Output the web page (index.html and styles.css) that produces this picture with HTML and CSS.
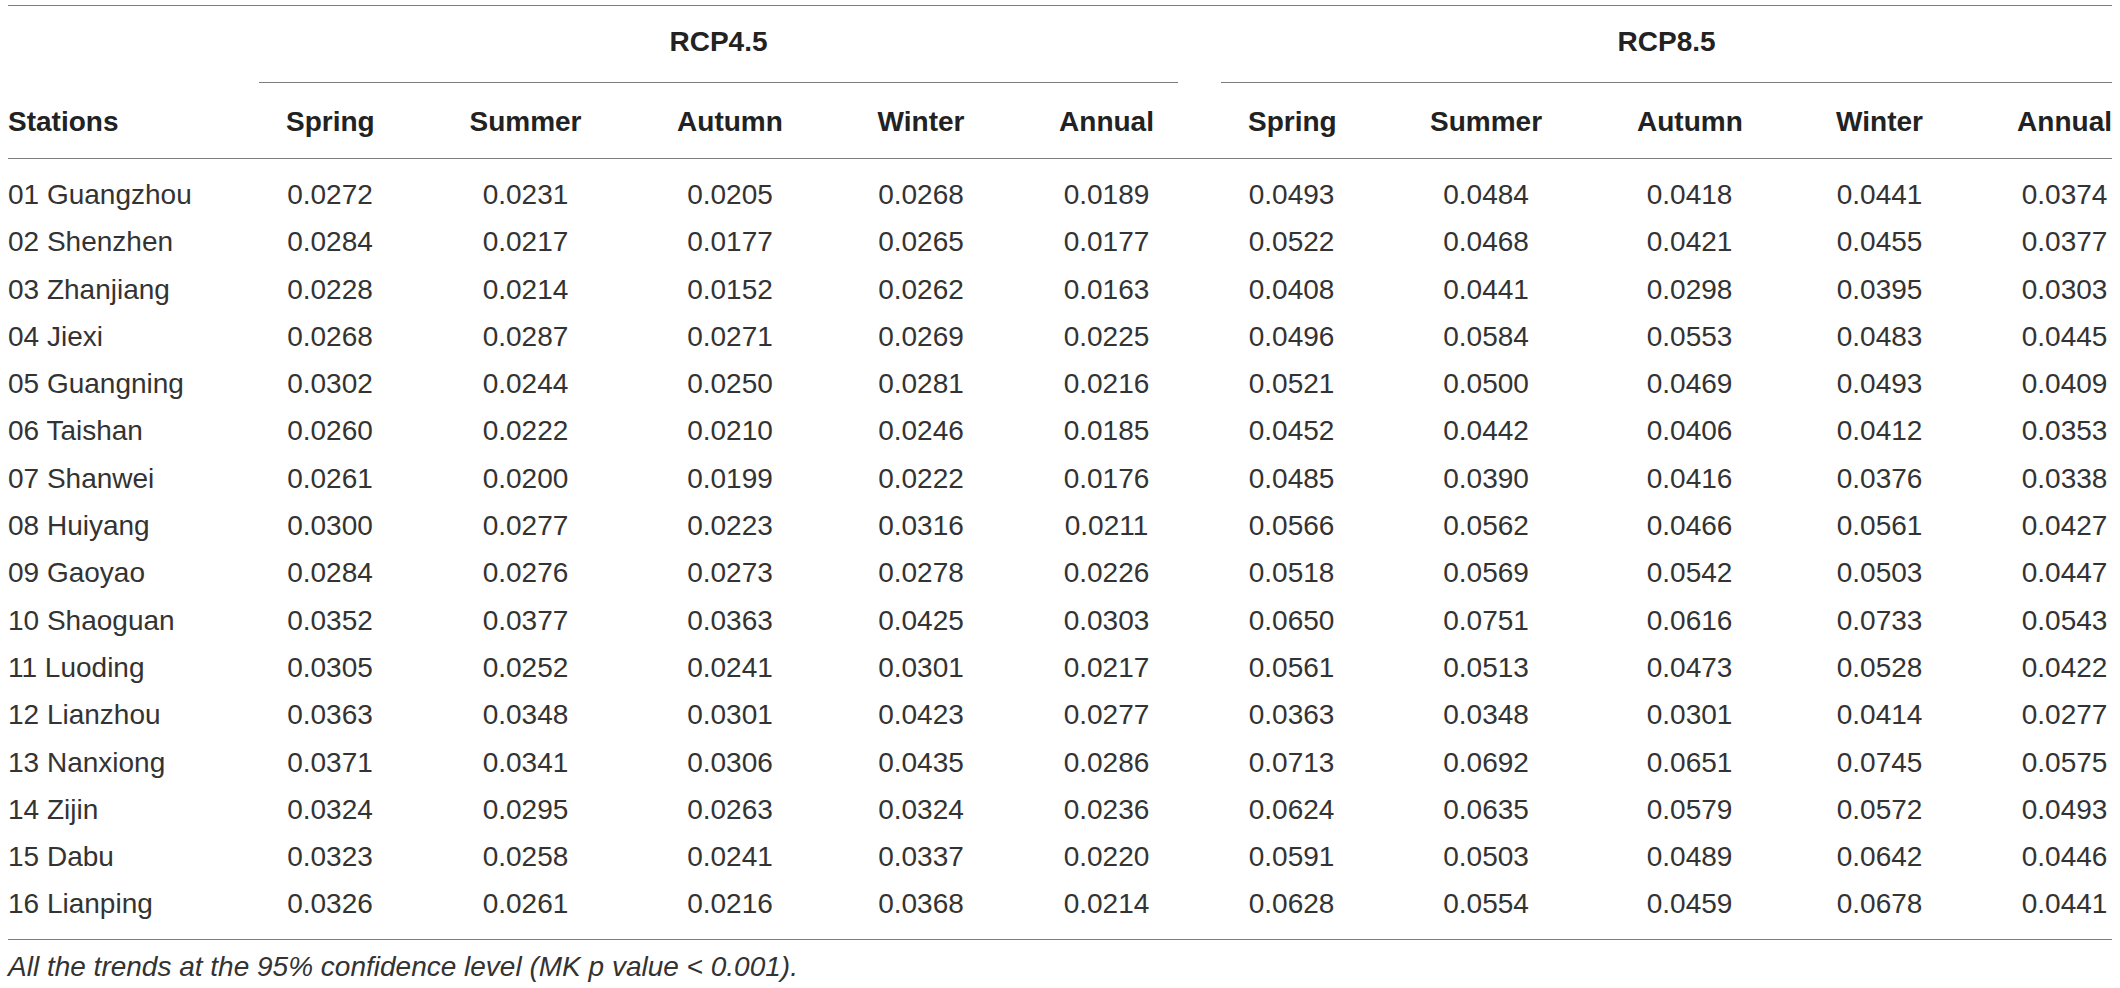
FILE: index.html
```html
<!DOCTYPE html>
<html lang="en">
<head>
<meta charset="utf-8">
<title>Trends table</title>
<link rel="stylesheet" href="styles.css">
</head>
<body>
<div class="page">
<table class="data">
  <colgroup>
    <col class="c-st">
    <col class="c-sp"><col class="c-su"><col class="c-au"><col class="c-wi"><col class="c-an">
    <col class="c-sp2"><col class="c-su2"><col class="c-au2"><col class="c-wi2"><col class="c-an2">
  </colgroup>
  <thead>
    <tr class="group-row">
      <th class="blank"></th>
      <th colspan="5" class="group"><div class="group-label g1">RCP4.5</div></th>
      <th colspan="5" class="group"><div class="group-label g2">RCP8.5</div></th>
    </tr>
    <tr class="head-row">
      <th class="name">Stations</th>
      <th>Spring</th><th>Summer</th><th>Autumn</th><th>Winter</th><th>Annual</th>
      <th>Spring</th><th>Summer</th><th>Autumn</th><th>Winter</th><th class="last">Annual</th>
    </tr>
  </thead>
  <tbody>
    <tr><td class="name">01 Guangzhou</td><td>0.0272</td><td>0.0231</td><td>0.0205</td><td>0.0268</td><td>0.0189</td><td>0.0493</td><td>0.0484</td><td>0.0418</td><td>0.0441</td><td class="last">0.0374</td></tr>
    <tr><td class="name">02 Shenzhen</td><td>0.0284</td><td>0.0217</td><td>0.0177</td><td>0.0265</td><td>0.0177</td><td>0.0522</td><td>0.0468</td><td>0.0421</td><td>0.0455</td><td class="last">0.0377</td></tr>
    <tr><td class="name">03 Zhanjiang</td><td>0.0228</td><td>0.0214</td><td>0.0152</td><td>0.0262</td><td>0.0163</td><td>0.0408</td><td>0.0441</td><td>0.0298</td><td>0.0395</td><td class="last">0.0303</td></tr>
    <tr><td class="name">04 Jiexi</td><td>0.0268</td><td>0.0287</td><td>0.0271</td><td>0.0269</td><td>0.0225</td><td>0.0496</td><td>0.0584</td><td>0.0553</td><td>0.0483</td><td class="last">0.0445</td></tr>
    <tr><td class="name">05 Guangning</td><td>0.0302</td><td>0.0244</td><td>0.0250</td><td>0.0281</td><td>0.0216</td><td>0.0521</td><td>0.0500</td><td>0.0469</td><td>0.0493</td><td class="last">0.0409</td></tr>
    <tr><td class="name">06 Taishan</td><td>0.0260</td><td>0.0222</td><td>0.0210</td><td>0.0246</td><td>0.0185</td><td>0.0452</td><td>0.0442</td><td>0.0406</td><td>0.0412</td><td class="last">0.0353</td></tr>
    <tr><td class="name">07 Shanwei</td><td>0.0261</td><td>0.0200</td><td>0.0199</td><td>0.0222</td><td>0.0176</td><td>0.0485</td><td>0.0390</td><td>0.0416</td><td>0.0376</td><td class="last">0.0338</td></tr>
    <tr><td class="name">08 Huiyang</td><td>0.0300</td><td>0.0277</td><td>0.0223</td><td>0.0316</td><td>0.0211</td><td>0.0566</td><td>0.0562</td><td>0.0466</td><td>0.0561</td><td class="last">0.0427</td></tr>
    <tr><td class="name">09 Gaoyao</td><td>0.0284</td><td>0.0276</td><td>0.0273</td><td>0.0278</td><td>0.0226</td><td>0.0518</td><td>0.0569</td><td>0.0542</td><td>0.0503</td><td class="last">0.0447</td></tr>
    <tr><td class="name">10 Shaoguan</td><td>0.0352</td><td>0.0377</td><td>0.0363</td><td>0.0425</td><td>0.0303</td><td>0.0650</td><td>0.0751</td><td>0.0616</td><td>0.0733</td><td class="last">0.0543</td></tr>
    <tr><td class="name">11 Luoding</td><td>0.0305</td><td>0.0252</td><td>0.0241</td><td>0.0301</td><td>0.0217</td><td>0.0561</td><td>0.0513</td><td>0.0473</td><td>0.0528</td><td class="last">0.0422</td></tr>
    <tr><td class="name">12 Lianzhou</td><td>0.0363</td><td>0.0348</td><td>0.0301</td><td>0.0423</td><td>0.0277</td><td>0.0363</td><td>0.0348</td><td>0.0301</td><td>0.0414</td><td class="last">0.0277</td></tr>
    <tr><td class="name">13 Nanxiong</td><td>0.0371</td><td>0.0341</td><td>0.0306</td><td>0.0435</td><td>0.0286</td><td>0.0713</td><td>0.0692</td><td>0.0651</td><td>0.0745</td><td class="last">0.0575</td></tr>
    <tr><td class="name">14 Zijin</td><td>0.0324</td><td>0.0295</td><td>0.0263</td><td>0.0324</td><td>0.0236</td><td>0.0624</td><td>0.0635</td><td>0.0579</td><td>0.0572</td><td class="last">0.0493</td></tr>
    <tr><td class="name">15 Dabu</td><td>0.0323</td><td>0.0258</td><td>0.0241</td><td>0.0337</td><td>0.0220</td><td>0.0591</td><td>0.0503</td><td>0.0489</td><td>0.0642</td><td class="last">0.0446</td></tr>
    <tr><td class="name">16 Lianping</td><td>0.0326</td><td>0.0261</td><td>0.0216</td><td>0.0368</td><td>0.0214</td><td>0.0628</td><td>0.0554</td><td>0.0459</td><td>0.0678</td><td class="last">0.0441</td></tr>
  </tbody>
</table>
<p class="note">All the trends at the 95% confidence level (MK p value &lt; 0.001).</p>
</div>
</body>
</html>
```

FILE: styles.css
```css
html, body {
  margin: 0;
  padding: 0;
  background: #ffffff;
}

.page {
  padding: 5px 8px 0 8px;
  font-family: "Liberation Sans", Arial, Helvetica, sans-serif;
  font-size: 28px;
  color: #333333;
}

.data {
  table-layout: fixed;
  width: 2104px;
  border-collapse: separate;
  border-spacing: 0;
  border-top: 1px solid #7d7d7d;
  border-bottom: 1px solid #7d7d7d;
}

.c-st { width: 210px; }
.c-sp { width: 182px; }
.c-su { width: 209px; }
.c-au { width: 200px; }
.c-wi { width: 182px; }
.c-an { width: 189px; }
.c-sp2 { width: 181px; }
.c-su2 { width: 208px; }
.c-au2 { width: 199px; }
.c-wi2 { width: 181px; }
.c-an2 { width: 163px; }

.data th,
.data td {
  padding: 0 26px 0 68px;
  text-align: center;
  white-space: nowrap;
}

.data th {
  font-weight: 700;
  color: #222222;
}

.data .name {
  padding-left: 0;
  padding-right: 0;
  text-align: left;
}

.data .last {
  padding-right: 0;
}

.group-row th {
  padding: 0;
  vertical-align: top;
}

.group-label {
  margin-left: 41px;
  padding: 19px 0 23px 0;
  line-height: 34px;
  text-align: center;
  border-bottom: 1px solid #7d7d7d;
}

.group-label.g1 {
  margin-right: 2px;
}

.head-row th {
  padding-top: 22px;
  padding-bottom: 19px;
  line-height: 34px;
  border-bottom: 1px solid #7d7d7d;
}

.data td {
  line-height: 47.3px;
  font-weight: 400;
}

.data tbody tr:first-child td {
  padding-top: 12px;
}

.data tbody tr:last-child td {
  padding-bottom: 11px;
}

.note {
  margin: 10px 0 0 0;
  line-height: 34px;
  font-style: italic;
  color: #333333;
}
```
